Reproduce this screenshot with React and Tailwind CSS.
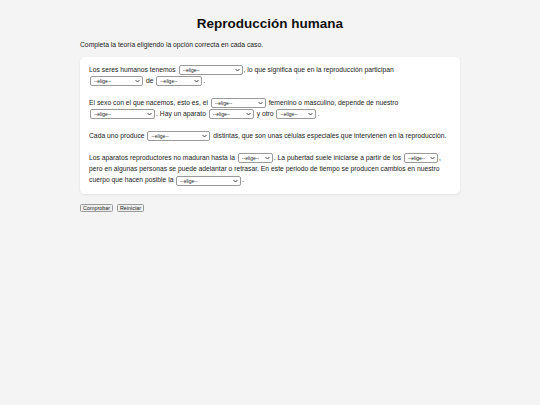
import React, { useState } from 'react';

const opciones = {
    s1: ['--elige--', 'órganos sexuales', 'aparatos reproductores'],
    s2: ['--elige--', 'un hombre', 'una mujer'],
    s3: ['--elige--', 'una mujer', 'un hombre'],
    s4: ['--elige--', 'sexo', 'género'],
    s5: ['--elige--', 'reproductor', 'digestivo'],
    s6: ['--elige--', 'reproductor', 'respiratorio'],
    s7: ['--elige--', 'dos', 'tres'],
    s8: ['--elige--', 'gametos', 'órganos'],
    s9: ['--elige--', 'pubertad', 'infancia'],
    s10: ['--elige--', '10 años', '5 años'],
    s11: ['--elige--', 'reproducción', 'digestión'],
};

const Chevron = () => (
    <svg className="absolute right-[3px] top-1/2 -translate-y-1/2 pointer-events-none" width="5" height="3" viewBox="0 0 10 6">
        <path d="M1 1l4 4 4-4" fill="none" stroke="#333" strokeWidth="1.8" />
    </svg>
);

const Elige = ({ id, width, value, onChange }) => (
    <span className="relative inline-block align-middle mx-[1px]" style={{ width }}>
        <select
            value={value}
            onChange={(e) => onChange(id, e.target.value)}
            className="appearance-none block w-full h-[10px] leading-[8px] text-[5px] text-[#222] bg-white border border-[#9a9a9a] rounded-[2px] pl-[3px] pr-[8px] py-0"
            style={{ fontFamily: '"Liberation Sans", Arial, sans-serif' }}
        >
            {opciones[id].map((o) => (
                <option key={o} value={o}>{o}</option>
            ))}
        </select>
        <Chevron />
    </span>
);

export default function App() {
    const [respuestas, setRespuestas] = useState({});

    const cambiar = (id, v) => setRespuestas({ ...respuestas, [id]: v });
    const sel = (id, width) => (
        <Elige id={id} width={width} value={respuestas[id] || '--elige--'} onChange={cambiar} />
    );

    return (
        <div className="min-h-screen bg-[#f4f4f4] text-[#222]" style={{ fontFamily: '"Liberation Sans", Arial, sans-serif' }}>
            <div className="w-[380px] mx-auto pt-[16px]">
                <h1 className="text-[13.5px] leading-[16px] font-bold text-center text-[#111]">Reproducción humana</h1>
                <p className="mt-[8px] text-[6.75px] leading-[10px]">Completa la teoría eligiendo la opción correcta en cada caso.</p>

                <div className="mt-[7px] bg-white rounded-[5px] shadow-[0_1px_3px_rgba(0,0,0,0.08)] pt-[7px] pb-[8px] pl-[9px] pr-[8px] text-[6.75px] leading-[11px]">
                    <p className="mb-[10.5px]">
                        Los seres humanos tenemos {sel('s1', 64)}, lo que significa que en la reproducción participan<br />
                        {sel('s2', 53)} de {sel('s3', 46)}.
                    </p>
                    <p className="mb-[10.5px]">
                        El sexo con el que nacemos, esto es, el {sel('s4', 55)} femenino o masculino, depende de nuestro<br />
                        {sel('s5', 65)}. Hay un aparato {sel('s6', 45)} y otro {sel('s7', 40)}.
                    </p>
                    <p className="mb-[11px] whitespace-nowrap">
                        Cada uno produce {sel('s8', 63)} distintas, que son unas células especiales que intervienen en la reproducción.
                    </p>
                    <p>
                        Los aparatos reproductores no maduran hasta la {sel('s9', 35)}. La pubertad suele iniciarse a partir de los {sel('s10', 34)},<br />
                        pero en algunas personas se puede adelantar o retrasar. En este periodo de tiempo se producen cambios en nuestro<br />
                        cuerpo que hacen posible la {sel('s11', 65)}.
                    </p>
                </div>

                <div className="mt-[10px] flex gap-[4px]">
                    <button className="h-[8px] px-[2px] text-[5.4px] leading-[6px] text-[#222] bg-[#efefef] border border-[#9a9a9a] rounded-[1.5px]" onClick={() => {}}>Comprobar</button>
                    <button className="h-[8px] px-[2px] text-[5.4px] leading-[6px] text-[#222] bg-[#efefef] border border-[#9a9a9a] rounded-[1.5px]" onClick={() => setRespuestas({})}>Reiniciar</button>
                </div>
            </div>
        </div>
    );
}
